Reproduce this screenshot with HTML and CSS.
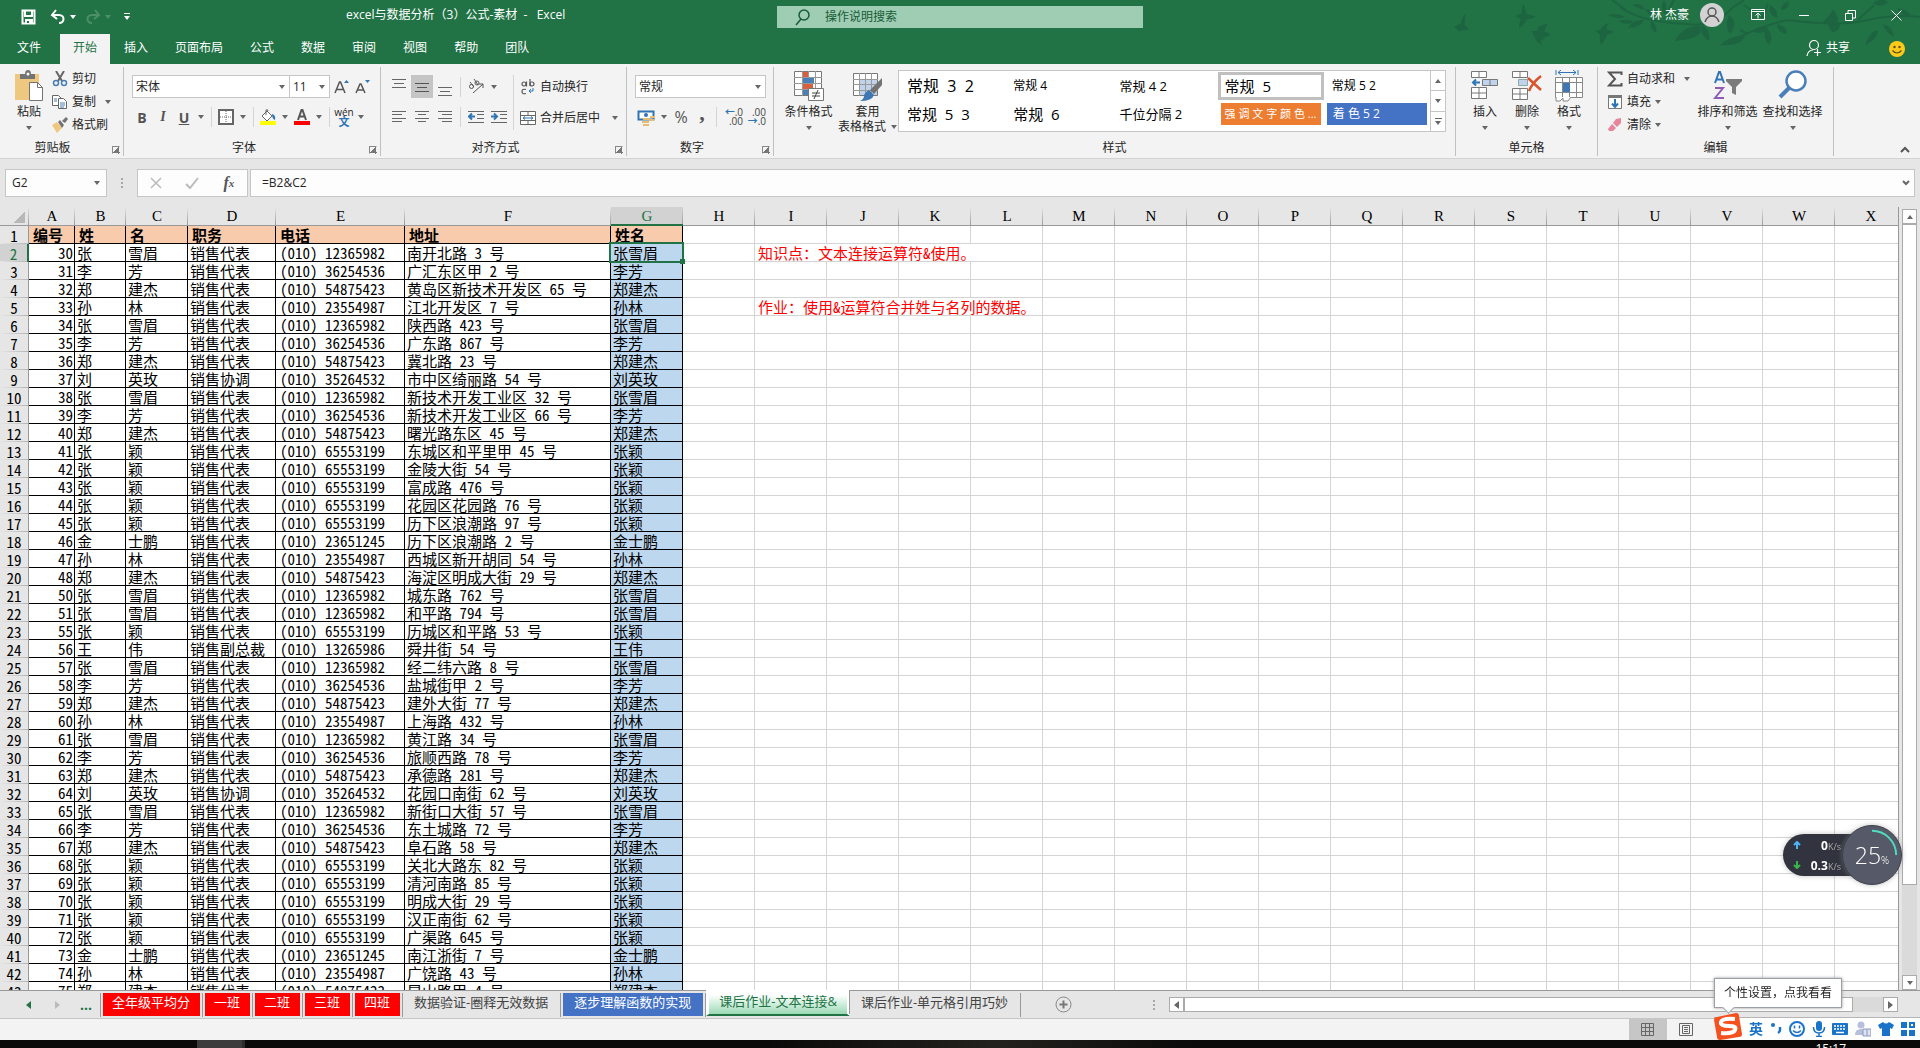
FILE: index.html
```html
<!DOCTYPE html>
<html lang="zh-CN">
<head>
<meta charset="utf-8">
<title>excel与数据分析（3）公式-素材 - Excel</title>
<link rel="stylesheet" href="styles.css">
</head>
<body>
<header class="top">
  <svg class="decor" viewBox="0 0 480 64" aria-hidden="true">
    <g fill="#1d6540">
      <path d="M14 27q4-2 7-4q1-7 5-9q-2 6-1 11q3 4 4 5l-6 0q-5 3-6-1z"/>
      <path d="M75 16q5-2 7-3q-1-6 2-9q2 6 2 10q6 1 10 3q-5 2-9 2q-2 6-8 9q0-6 2-9z"/>
      <path d="M91 31l6 0q-1-6 11-7q-4 4-3 8q4 1 6 3l-6 2q-2 3-5 4q2 3 3 4q-7-2-9-9q-2-4-3-5z"/>
      <path d="M155 31q5-1 6-2q2-5 8-6q-3 4-2 7q4 0 7 2l-7 3q-2 5-6 10q-2-7-1-10q-2-3-5-4z"/>
      <path d="M168 15q10-3 17 2q-9 3-17-2zM178 21q10-3 16 1q-9 4-16-1zM188 28q5-9 16-8q-4 8-16 8zM193 5q6 5 12 4q-5-7-12-4zM205 9q8 1 12 8q-9-1-12-8zM211 21q7 4 5 12q-7-5-5-12zM224 0q4 6 1 14q-6-6-1-14zM235 41q8-16 25-15q6 12-25 15zM262 25q9 5 7 16q-10-6-7-16zM289 15q10 7 1 19q-6-8-1-19zM280 45q12-11 25-8q-6 10-25 8zM312 31q10-7 16-3q-6 8-16 3zM326 27q9 9 3 18q-7-8-3-18zM337 24q10 2 10 10q-10-2-10-10zM330 5q9 5 7 13q-10-4-7-13zM341 10q1-8 8-8q0 8-8 8zM381 23q9-7 12-14q7 10 4 14zM387 23q10-3 13 3q-2 6-8 6zM425 45q4-14 13-15q0 9-13 15zM443 24q10 3 11 13q-8-4-11-13zM457 8q11 1 15 9q-11 0-15-9zM433 3q9-6 15-1q-7 7-15 1z"/>
    </g>
    <g fill="none" stroke="#1d6540" stroke-width="2">
      <path d="M180 7Q200 22 246 24Q275 28 292 8L304 0M304 5l10 7M292 41Q322 25 348 20Q400 27 428 20Q452 14 480 17M172 0l14 10M234 0l-8 15M300 30l8 4M322 18l6-14M418 20l16-15"/>
    </g>
  </svg>
  <div class="titlebar">
    <div class="quick">
      <button aria-label="保存"><svg width="16" height="16" viewBox="0 0 16 16"><path d="M1.500 1.500h12v13h-12z M4 2v5h7V2" fill="none" stroke="#fff" stroke-width="2"/><path d="M4 10h8v4H4z" fill="#fff"/><path d="M6 12h2v2H6z" fill="#217346"/></svg></button>
      <button class="undo" aria-label="撤消"><svg width="16" height="16" viewBox="0 0 16 16"><path d="M2 6h7c6 0 6 8 0 8M6 1L2 6l5 4" fill="none" stroke="#fff" stroke-width="2"/></svg><i class="ar light"></i></button>
      <button class="redo" aria-label="恢复"><svg width="16" height="16" viewBox="0 0 16 16"><path d="M14 6H7c-6 0-6 8 0 8M10 1l4 5-5 4" fill="none" stroke="#4d9068" stroke-width="2"/></svg><i class="ar light dim"></i></button>
      <button aria-label="自定义快速访问工具栏"><svg width="8" height="8" viewBox="0 0 8 8"><path d="M1 0h6v1H1zM1 3h6L4 7z" fill="#fff"/></svg></button>
    </div>
    <div class="title">excel与数据分析（3）公式-素材&nbsp;&nbsp;-&nbsp;&nbsp;&nbsp;Excel</div>
    <label class="search"><svg width="16" height="18" viewBox="0 0 16 18"><circle cx="9" cy="7" r="5" fill="none" stroke="#185c37" stroke-width="1.500"/><path d="M6 11l-5 6" stroke="#185c37" stroke-width="1.500"/></svg><input type="text" placeholder="操作说明搜索" aria-label="操作说明搜索"></label>
    <div class="account">
      <span>林 杰豪</span>
      <svg width="24" height="24" viewBox="0 0 24 24"><circle cx="12" cy="12" r="12" fill="#d2d2d2"/><g fill="none" stroke="#555" stroke-width="1.500"><circle cx="12" cy="9" r="4"/><path d="M5 19q2-6 7-6t7 6"/></g></svg>
    </div>
    <div class="winbtns">
      <button aria-label="功能区显示选项"><svg width="14" height="12" viewBox="0 0 14 12"><path d="M.500.500h13v10H.500zM.500 2.500h13M7 9.500v-5M4.500 6.500L7 4l2.500 2.500" fill="none" stroke="#fff"/></svg></button>
      <button aria-label="最小化"><svg width="10" height="10" viewBox="0 0 10 10"><path d="M0 5.500h10" stroke="#fff"/></svg></button>
      <button aria-label="还原"><svg width="11" height="11" viewBox="0 0 11 11"><path d="M.500 3.500h7v7h-7zM3 3V.500h7.500V8H8" fill="none" stroke="#fff"/></svg></button>
      <button aria-label="关闭"><svg width="11" height="11" viewBox="0 0 11 11"><path d="M.500.500l10 10M10.500.500l-10 10" stroke="#fff"/></svg></button>
    </div>
  </div>
  <nav class="tabs">
    <button class="file">文件</button><button class="on">开始</button><button>插入</button><button>页面布局</button><button>公式</button><button>数据</button><button>审阅</button><button>视图</button><button>帮助</button><button>团队</button>
    <button class="share"><svg width="16" height="18" viewBox="0 0 16 18"><g fill="none" stroke="#fff" stroke-width="1.200"><circle cx="8" cy="6" r="4.500"/><path d="M1 17q1-6 6-6M8 13.500h7M11.500 10v7"/></g></svg>共享</button>
    <button class="smile" aria-label="反馈"><svg width="16" height="16" viewBox="0 0 16 16"><circle cx="8" cy="8" r="8" fill="#fecb1b"/><circle cx="5.500" cy="6" r="1.200" fill="#5a4a18"/><circle cx="10.500" cy="6" r="1.200" fill="#5a4a18"/><path d="M3.500 9.500q4.500 5 9 0" fill="none" stroke="#5a4a18" stroke-width="1.200"/></svg></button>
  </nav>
</header>

<section class="ribbon">
  <div class="group clipboard">
    <div class="body">
      <button class="big"><svg width="28" height="32" viewBox="0 0 28 32"><path d="M0 4h24v26H0z" fill="#edc87e"/><path d="M5 4h5q0-4 3-4t3 4h4v5H5z" fill="#737373"/><circle cx="13" cy="4" r="1.500" fill="#fff"/><path d="M14.500 12.500h8l5 5v13h-13z" fill="#fff" stroke="#737373"/><path d="M22.500 12.500v5h5" fill="none" stroke="#737373"/></svg><span>粘贴</span><i class="ar"></i></button>
      <div class="stack">
        <button class="small"><svg width="16" height="16" viewBox="0 0 16 16"><path d="M4 0l6 10M12 0L6 10" stroke="#666" stroke-width="2"/><circle cx="4" cy="12" r="2.500" fill="none" stroke="#4a7fb5" stroke-width="1.500"/><circle cx="12" cy="12" r="2.500" fill="none" stroke="#4a7fb5" stroke-width="1.500"/></svg>剪切</button>
        <button class="small"><svg width="16" height="16" viewBox="0 0 16 16"><g fill="#fff" stroke="#666"><path d="M.500 1.500h6l3 3v7h-9z"/><path d="M6.500 4.500h5l3 3v7h-8z"/></g><path d="M2 5h3M2 7h3M8 9h5M8 11h5M8 13h4" stroke="#4a7fb5"/></svg>复制<i class="ar far"></i></button>
        <button class="small"><svg width="16" height="16" viewBox="0 0 16 16"><path d="M0 8l5-3 5 6-5 5z" fill="#edc87e"/><path d="M6 5l2-2 4 5-2 3zM10 4l4-4 2 2-3 4z" fill="#737373"/></svg>格式刷</button>
      </div>
    </div>
    <div class="label">剪贴板</div><button class="launch" aria-label="剪贴板选项"></button>
  </div>

  <div class="group font">
    <div class="body rows">
      <div class="row tall">
        <span class="combo name"><select aria-label="字体"><option>宋体</option></select></span><span class="combo size"><select aria-label="字号"><option>11</option></select></span>
        <button class="ic grow" aria-label="增大字号"><svg width="16" height="16" viewBox="0 0 16 16"><path d="M1 14L5.500 3h1L11 14M3 10.500h6" fill="none" stroke="#555" stroke-width="1.500"/><path d="M10 4h5l-2.500-3z" fill="#2f74b5"/></svg></button>
        <button class="ic" aria-label="减小字号"><svg width="16" height="16" viewBox="0 0 16 16"><path d="M1 14L5 5h1l4 9M3 11h5" fill="none" stroke="#555" stroke-width="1.500"/><path d="M10 1h5l-2.500 3z" fill="#2f74b5"/></svg></button>
      </div>
      <div class="row">
        <button class="ic b">B</button><button class="ic it">I</button><button class="ic u">U</button><i class="ar"></i><i class="sep"></i>
        <button class="ic" aria-label="边框"><svg width="16" height="16" viewBox="0 0 16 16"><path d="M1 1h14v14H1z" fill="#fff" stroke="#666" stroke-width="2"/><path d="M8 2v12M2 8h12" stroke="#666" stroke-dasharray="1 1"/></svg></button><i class="ar"></i><i class="sep"></i>
        <button class="ic" aria-label="填充颜色"><svg width="18" height="16" viewBox="0 0 18 16"><path d="M3 7l5-5 5 5-5 5z" fill="#fff" stroke="#666"/><path d="M7 6V1q2-1 2 1" fill="none" stroke="#666"/><path d="M13 5q4 1 3 6q-3-1-3-6z" fill="#2f74b5"/><path d="M1 12h16v4H1z" fill="#ff0"/></svg></button><i class="ar"></i>
        <button class="ic" aria-label="字体颜色"><svg width="16" height="16" viewBox="0 0 16 16"><path d="M4 11L7.500 1h1L12 11M5.500 7.500h5" fill="none" stroke="#555" stroke-width="2"/><path d="M0 12h16v4H0z" fill="red"/></svg></button><i class="ar"></i><i class="sep"></i>
        <button class="ic wen" aria-label="拼音"><span>wén</span><b>文</b></button><i class="ar"></i>
      </div>
    </div>
    <div class="label">字体</div><button class="launch" aria-label="字体设置"></button>
  </div>

  <div class="group align">
    <div class="body">
      <div class="rows">
        <div class="row tall">
          <button class="ic" aria-label="顶端对齐"><svg width="16" height="20" viewBox="0 0 16 20"><path d="M1 2.500h14M3 6.500h10M1 10.500h14" stroke="#666"/></svg></button><button class="ic on" aria-label="垂直居中"><svg width="16" height="20" viewBox="0 0 16 20"><path d="M1 6.500h14M3 10.500h10M1 14.500h14" stroke="#555"/></svg></button><button class="ic" aria-label="底端对齐"><svg width="16" height="20" viewBox="0 0 16 20"><path d="M1 10.500h14M3 14.500h10M1 18.500h14" stroke="#666"/></svg></button><i class="sep"></i>
          <button class="ic" aria-label="方向"><svg width="17" height="17" viewBox="0 0 17 17"><g fill="none" stroke="#555"><circle cx="3.500" cy="8.500" r="2"/><path d="M2 4l4 5"/><circle cx="9" cy="5" r="2"/><path d="M6 1l4 6M5 15L15 6M11 6h4v4"/></g></svg></button><i class="ar"></i>
        </div>
        <div class="row">
          <button class="ic" aria-label="左对齐"><svg width="16" height="14" viewBox="0 0 16 14"><path d="M1 1.500h14M1 4.500h10M1 8.500h14M1 11.500h10" stroke="#666"/></svg></button><button class="ic" aria-label="居中"><svg width="16" height="14" viewBox="0 0 16 14"><path d="M1 1.500h14M4 4.500h8M1 8.500h14M4 11.500h8" stroke="#666"/></svg></button><button class="ic" aria-label="右对齐"><svg width="16" height="14" viewBox="0 0 16 14"><path d="M1 1.500h14M5 4.500h10M1 8.500h14M5 11.500h10" stroke="#666"/></svg></button><i class="sep"></i>
          <button class="ic" aria-label="减少缩进"><svg width="16" height="14" viewBox="0 0 16 14"><path d="M0 1.500h16M9 4.500h7M9 8.500h7M0 12.500h16" stroke="#666"/><path d="M7 6.500H1M4 3.500l-3 3 3 3" fill="none" stroke="#2f74b5" stroke-width="2"/></svg></button><button class="ic" aria-label="增加缩进"><svg width="16" height="14" viewBox="0 0 16 14"><path d="M0 1.500h16M9 4.500h7M9 8.500h7M0 12.500h16" stroke="#666"/><path d="M0 6.500h6M3 3.500l3 3-3 3" fill="none" stroke="#2f74b5" stroke-width="2"/></svg></button>
        </div>
      </div>
      <i class="vsep"></i>
      <div class="rows">
        <button class="small tall"><svg width="16" height="16" viewBox="0 0 16 16"><g fill="none" stroke="#555" stroke-width="1.200"><circle cx="4" cy="5" r="2"/><path d="M6.500 2.500v5M10 0v7"/><circle cx="12" cy="5" r="2"/><path d="M6 10.500q-4-1-4 2t4 2"/></g><path d="M13 9v3H9M11 10l-2 2 2 2" fill="none" stroke="#2f74b5"/></svg>自动换行</button>
        <button class="small"><svg width="16" height="16" viewBox="0 0 16 16"><path d="M.500 1.500h15v13H.500zM.500 5.500h15M.500 10.500h15M8 1.500v4M8 10.500v4" fill="#fff" stroke="#666"/><path d="M3 8h10M5 6.500L3 8l2 1.500M11 6.500L13 8l-2 1.500" fill="none" stroke="#2f74b5"/></svg>合并后居中<i class="ar far"></i></button>
      </div>
    </div>
    <div class="label">对齐方式</div><button class="launch" aria-label="对齐设置"></button>
  </div>

  <div class="group number">
    <div class="body rows">
      <div class="row tall"><span class="combo fmt"><select aria-label="数字格式"><option>常规</option></select></span></div>
      <div class="row">
        <button class="ic" aria-label="会计数字格式"><svg width="18" height="17" viewBox="0 0 18 17"><path d="M1.500 2.500h15v8h-15z" fill="#fff" stroke="#2f74b5" stroke-width="2"/><circle cx="9" cy="6" r="2" fill="#2f74b5"/><path d="M6 9h6v2H6zM5 12h7v2H5zM6 15h6v2H6zM13 7h5v2h-5zM12 10h5v2h-5z" fill="#e8bd70"/></svg></button><i class="ar"></i>
        <button class="ic pct">%</button><button class="ic comma">,</button><i class="sep"></i>
        <button class="ic dec" aria-label="增加小数位数"><span><b>←</b>.0</span><span>.00</span></button><button class="ic dec" aria-label="减少小数位数"><span>.00</span><span><b>→</b>.0</span></button>
      </div>
    </div>
    <div class="label">数字</div><button class="launch" aria-label="数字设置"></button>
  </div>

  <div class="group styles">
    <div class="body">
      <button class="big"><svg width="30" height="32" viewBox="0 0 30 32"><path d="M.500 1.500h27v24H.500z" fill="#fff" stroke="#777"/><path d="M8.500 1v25M14.500 1v25M21.500 1v25M0 7.500h28M0 13.500h28M0 19.500h28" stroke="#999"/><path d="M9 2h5v5H9zM9 14h10v5H9z" fill="#d9603f"/><path d="M9 8h11v5H9zM9 20h5v5H9z" fill="#4a7fb8"/><path d="M14.500 18.500h15v12h-15z" fill="#fff" stroke="#777"/><path d="M18 23h8M18 26h8M24 20l-4 9" stroke="#444"/></svg><span>条件格式</span><i class="ar"></i></button>
      <button class="big"><svg width="30" height="32" viewBox="0 0 30 32"><path d="M.500 3.500h24v22H.500z" fill="#fff" stroke="#777"/><path d="M7 9h17v16H7z" fill="#c0d3ea"/><path d="M6.500 3v23M12.500 3v23M18.500 3v23M0 9.500h25M0 14.500h25M0 20.500h25" stroke="#999"/><path d="M29 8v7l-8 9-4-4z" fill="#737373"/><path d="M16 20l5 5q-2 6-14 6q4-2 4-5t5-6z" fill="#3f77b5"/></svg><span>套用</span><span class="two">表格格式<i class="ar"></i></span></button>
      <div class="gallery">
        <div class="cells">
          <button class="g16">常规&nbsp; 3&nbsp; 2</button><button class="g12">常规 4</button><button>常规 4 2</button><button class="g15 sel">常规&nbsp; 5</button><button class="g12">常规 5 2</button>
          <button class="g15">常规&nbsp; 5&nbsp; 3</button><button class="g15">常规&nbsp; 6</button><button>千位分隔 2</button><button class="fill orange">强 调 文 字 颜 色 ...</button><button class="fill blue">着 色 5 2</button>
        </div>
        <div class="spin"><button aria-label="上一行"><i class="ar up"></i></button><button aria-label="下一行"><i class="ar"></i></button><button aria-label="其他"><i class="line"></i><i class="ar"></i></button></div>
      </div>
    </div>
    <div class="label">样式</div>
  </div>

  <div class="group cellsg">
    <div class="body">
      <button class="big"><svg width="28" height="32" viewBox="0 0 28 32"><g fill="#fff" stroke="#777"><path d="M.500 1.500h15v6H.500zM8 1.500v6M.500 17.500h15v11H.500zM8 17.500v11M.500 23h15"/></g><path d="M11.500 9.500h15v6h-15zM19 9.500v6" fill="#c0d3ea" stroke="#777"/><path d="M9 12.500H2M5 9.500l-3 3 3 3" fill="none" stroke="#2f74b5" stroke-width="2"/></svg><span>插入</span><i class="ar"></i></button>
      <button class="big"><svg width="30" height="32" viewBox="0 0 30 32"><g fill="#fff" stroke="#777"><path d="M.500 1.500h15v6H.500zM8 1.500v6M.500 18.500h15v11H.500zM8 18.500v11M.500 24h15"/></g><path d="M6.500 9.500h9v6h-9z" fill="#c0d3ea" stroke="#8aa"/><path d="M16 8l13 12M29 6Q20 13 17 21" stroke="#d9532c" stroke-width="2.500" fill="none"/></svg><span>删除</span><i class="ar"></i></button>
      <button class="big"><svg width="30" height="32" viewBox="0 0 30 32"><path d="M2 0v5M24 0v5M4 2.500h18M7 0L4 2.500 7 5M19 0l3 2.500L19 5" fill="none" stroke="#2f74b5"/><path d="M1.500 7.500h27v20h-27zM8.500 7v21M15.500 7v21M22.500 7v21M1 12.500h27M1 22.500h27" fill="#fff" stroke="#888"/><path d="M9 13h7v9H9z" fill="#3f77b5"/><path d="M2 27v4h4l3-3v3h5l3-4" fill="#fff" stroke="#888"/></svg><span>格式</span><i class="ar"></i></button>
    </div>
    <div class="label">单元格</div>
  </div>

  <div class="group edit">
    <div class="body">
      <div class="stack">
        <button class="small"><svg width="16" height="16" viewBox="0 0 16 16"><path d="M14.500 4V1.500H2L8 8l-6 6.500h12.500V12" fill="none" stroke="#555" stroke-width="2"/></svg>自动求和<i class="ar far"></i></button>
        <button class="small"><svg width="16" height="16" viewBox="0 0 16 16"><path d="M1.500 1.500h13v13h-13z" fill="#fff" stroke="#777"/><path d="M1 1h14v3H1z" fill="#777"/><path d="M8 5v8M5 9.500L8 13l3-3.500" fill="none" stroke="#2f74b5" stroke-width="2"/></svg>填充<i class="ar"></i></button>
        <button class="small"><svg width="16" height="16" viewBox="0 0 16 16"><path d="M9 2l5-1v5l-4 4-4-4z" fill="#e8849b"/><path d="M5 7l4 4-3 3H2l-1-2z" fill="#e8849b"/></svg>清除<i class="ar"></i></button>
      </div>
      <button class="big wide"><svg width="30" height="32" viewBox="0 0 30 32"><path d="M2 13L6 2h1l4 11M3.500 9.500h6" fill="none" stroke="#2f74b5" stroke-width="2"/><path d="M2 18h8L2 28h9" fill="none" stroke="#8e5bb5" stroke-width="2"/><path d="M13 9h16v2l-6 6v8l-4-2v-6l-6-6z" fill="#7b7b7b"/></svg><span>排序和筛选</span><i class="ar"></i></button>
      <button class="big wide"><svg width="30" height="32" viewBox="0 0 30 32"><circle cx="18" cy="11" r="9.500" fill="#fff" stroke="#4a80b8" stroke-width="2.500"/><path d="M11 18l-9 9" stroke="#4a80b8" stroke-width="4"/></svg><span>查找和选择</span><i class="ar"></i></button>
    </div>
    <div class="label">编辑</div>
  </div>
  <div class="tail"><button aria-label="折叠功能区"><svg width="10" height="7" viewBox="0 0 10 7"><path d="M1 6l4-4 4 4" fill="none" stroke="#555" stroke-width="2"/></svg></button></div>
</section>

<section class="formula">
  <span class="combo nb"><input type="text" value="G2" aria-label="名称框"></span>
  <i class="dots"></i>
  <div class="fx">
    <button aria-label="取消"><svg width="12" height="12" viewBox="0 0 12 12"><path d="M1 1l10 10M11 1L1 11" stroke="#bbb" stroke-width="1.500"/></svg></button>
    <button aria-label="输入"><svg width="14" height="12" viewBox="0 0 14 12"><path d="M1 7l4 4 8-10" fill="none" stroke="#bbb" stroke-width="2"/></svg></button>
    <button class="fn">f<sub>x</sub></button>
  </div>
  <div class="fbox"><input type="text" value="=B2&amp;C2" aria-label="编辑栏"><svg width="8" height="6" viewBox="0 0 8 6"><path d="M1 1l3 3 3-3" fill="none" stroke="#666" stroke-width="2"/></svg></div>
</section>

<main class="work">
  <div class="sheet">
    <table id="grid"></table>
  </div>
  <div class="vbar"><button aria-label="向上滚动"><i class="ar up"></i></button><div class="thumb"></div><div class="track"></div><button aria-label="向下滚动"><i class="ar"></i></button></div>
</main>

<nav class="sheets">
  <div class="nav"><button aria-label="上一个"><svg width="6" height="8" viewBox="0 0 6 8"><path d="M5 0v8L0 4z" fill="#217346"/></svg></button><button aria-label="下一个"><svg width="6" height="8" viewBox="0 0 6 8"><path d="M1 0v8l5-4z" fill="#bbb"/></svg></button><button class="more">...</button></div>
  <button class="st red">全年级平均分</button><button class="st red">一班</button><button class="st red">二班</button><button class="st red">三班</button><button class="st red">四班</button><button class="st">数据验证-圈释无效数据</button><button class="st bl">逐步理解函数的实现</button><button class="st cur">课后作业-文本连接&amp;</button><button class="st">课后作业-单元格引用巧妙</button>
  <button class="add" aria-label="新工作表"><svg width="17" height="17" viewBox="0 0 17 17"><circle cx="8.500" cy="8.500" r="7.500" fill="none" stroke="#888"/><path d="M8.500 4.500v8M4.500 8.500h8" stroke="#777" stroke-width="2"/></svg></button>
  <i class="dots"></i>
  <div class="hbar"><button aria-label="向左滚动"><svg width="5" height="8" viewBox="0 0 5 8"><path d="M5 0v8L0 4z" fill="#666"/></svg></button><div class="thumb"></div><div class="track"></div><button aria-label="向右滚动"><svg width="5" height="8" viewBox="0 0 5 8"><path d="M0 0v8l5-4z" fill="#666"/></svg></button></div>
</nav>

<footer class="status">
  <button class="on" aria-label="普通"><svg width="14" height="13" viewBox="0 0 14 13"><path d="M.500.500h12v12H.500zM4.500 0v13M8.500 0v13M0 4.500h13M0 8.500h13" fill="none" stroke="#666"/></svg></button>
  <button aria-label="页面布局"><svg width="14" height="13" viewBox="0 0 14 13"><path d="M.500.500h13v12H.500zM3.500 2.500h7v8h-7zM5 4.500h4M5 6.500h4M5 8.500h4" fill="none" stroke="#666"/></svg></button>
</footer>
<div class="taskbar"><div class="run"></div><time>15:17</time></div>

<aside class="meter">
  <dl><div><dt><svg width="8" height="8" viewBox="0 0 8 8"><path d="M4 8V1M1 4l3-3 3 3" fill="none" stroke="#4db5f5" stroke-width="2"/></svg></dt><dd>0<small>K/s</small></dd></div><div><dt><svg width="8" height="8" viewBox="0 0 8 8"><path d="M4 0v7M1 4l3 3 3-3" fill="none" stroke="#39b54a" stroke-width="2"/></svg></dt><dd>0.3<small>K/s</small></dd></div></dl>
  <div class="ball"><svg viewBox="0 0 60 60" aria-hidden="true"><path d="M30 5a25 25 0 0 1 25 25" fill="none" stroke="#4fdcc0" stroke-width="2"/></svg><span>25<small>%</small></span></div>
</aside>

<div class="tip">个性设置，点我看看</div>
<div class="ime">
  <svg class="sogou" width="28" height="28" viewBox="0 0 28 28"><path d="M3 5L22 1q3 0 3 3l3 18q0 3-3 3L6 28q-3 0-3-3L0 8q0-3 3-3z" fill="#f4511e"/><path d="M21 7Q8 6 7 10t8 4q8 0 6 4t-14 3" fill="none" stroke="#fff" stroke-width="4"/></svg>
  <b>英</b>
  <svg width="12" height="14" viewBox="0 0 12 14"><circle cx="3" cy="3" r="2" fill="#1a73c8"/><path d="M10 5v3q0 2-2 3" fill="none" stroke="#1a73c8" stroke-width="2.500"/></svg>
  <svg width="16" height="16" viewBox="0 0 16 16"><circle cx="8" cy="8" r="7" fill="none" stroke="#1a73c8" stroke-width="2"/><path d="M5.500 4.500v3M10.500 4.500v3M4 9.500q4 4 8 0" fill="none" stroke="#1a73c8" stroke-width="1.500"/></svg>
  <svg width="14" height="16" viewBox="0 0 14 16"><rect x="4" y="0" width="6" height="10" rx="3" fill="#1a73c8"/><path d="M1.500 6q0 6 5.500 6t5.500-6M7 12v4M4 15.500h6" fill="none" stroke="#1a73c8" stroke-width="1.500"/></svg>
  <svg width="16" height="12" viewBox="0 0 16 12"><rect width="16" height="12" rx="1" fill="#1a73c8"/><path d="M2 3h12M2 6h12" stroke="#fff" stroke-width="1.500" stroke-dasharray="2 1"/><path d="M4 9.500h8" stroke="#fff" stroke-width="1.500"/></svg>
  <svg width="16" height="16" viewBox="0 0 16 16"><circle cx="6" cy="4" r="3.500" fill="#b6bfdb"/><path d="M0 14q0-6 6-6t5 6z" fill="#b6bfdb"/><path d="M8 8h8v7H8z" fill="#dde2f0" stroke="#8d9abf"/><path d="M12 8v7" stroke="#8d9abf"/></svg>
  <svg width="16" height="14" viewBox="0 0 16 14"><path d="M5 0q3 3 6 0l5 3-2 4-2-1v8H4V6L2 7 0 3z" fill="#1a73c8"/></svg>
  <svg width="14" height="14" viewBox="0 0 14 14"><path d="M0 0h6v6H0zM0 8h6v6H0zM8 8h6v6H8z" fill="#1a73c8"/><path d="M9 1h4v4H9z" fill="none" stroke="#1a73c8" stroke-width="2"/></svg>
</div>
<script src="grid.js"></script>
</body>
</html>
```
FILE: styles.css
```css
* { box-sizing: border-box; }
body { margin: 0; height: 100vh; display: flex; flex-direction: column; overflow: hidden; background: #e6e6e6; color: #262626; font: 12px/16px "Open Sans", "Noto Sans CJK SC", sans-serif; }
button, input, select { font: inherit; color: inherit; border: 0; margin: 0; padding: 0; background: none; border-radius: 0; outline: 0; }
svg { display: block; flex: none; }
i { font-style: normal; }

.ar { flex: none; width: 0; border: 3px solid transparent; border-top: 4px solid #666; border-bottom: 0; }
.ar.up { border-top: 0; border-bottom: 4px solid #666; }
.ar.light { border-top-color: #fff; }
.ar.dim { border-top-color: #4d9068; }

/* title bar and ribbon tabs */
.top { position: relative; background: #217346; color: #fff; flex: none; }
.decor { position: absolute; right: 0; top: 0; width: 480px; height: 64px; }
.titlebar { position: relative; height: 34px; display: flex; align-items: center; }
.quick { display: flex; align-items: center; padding-left: 21px; width: 346px; }
.quick button { display: flex; align-items: center; gap: 4px; }
.quick .undo { margin-left: 13px; }
.quick .redo { margin-left: 9px; }
.quick .redo + button { margin-left: 12px; }
.title { width: 431px; padding-bottom: 4px; white-space: nowrap; }
.search { width: 366px; height: 22px; background: #9fcdb3; display: flex; align-items: center; gap: 14px; padding-left: 18px; margin-bottom: 1px; }
.search input { flex: 1; height: 22px; }
.search input::placeholder { color: #185c37; opacity: 1; }
.account { flex: 1; display: flex; justify-content: flex-end; align-items: center; gap: 11px; padding-bottom: 4px; }
.winbtns { display: flex; width: 196px; padding: 0 0 4px 11px; }
.winbtns button { flex: 1; display: flex; justify-content: center; align-items: center; }
.tabs { position: relative; display: flex; gap: 1px; height: 30px; padding-left: 4px; }
.tabs button { padding: 0 13px 2px; }
.tabs .file { margin-right: 5px; }
.tabs .on { background: #f3f3f3; color: #217346; }
.tabs .share { margin-left: auto; display: flex; align-items: center; gap: 4px; padding-right: 14px; }
.tabs .smile { padding: 0 15px 0 24px; }

/* ribbon */
.ribbon { flex: none; display: flex; height: 95px; background: #f3f3f3; border-bottom: 1px solid #d2d2d2; padding-top: 3px; }
.group { position: relative; flex: none; display: flex; flex-direction: column; border-right: 1px solid #c0c0c0; margin-bottom: 2px; }
.body { display: flex; flex: 1; }
.label { text-align: center; height: 16px; }
.launch { position: absolute; right: 3px; bottom: 2px; width: 8px; height: 8px; border: 1px solid #888; border-right-color: transparent; border-bottom-color: transparent; background: linear-gradient(135deg, transparent 50%, #777 50%); }
.big { display: flex; flex-direction: column; align-items: center; padding-top: 3px; width: 42px; height: 66px; white-space: nowrap; }
.big span { line-height: 15px; }
.big .ar { margin-top: 7px; }
.big svg { margin-bottom: 2px; }
.big .two { display: flex; gap: 5px; align-items: center; }
.big .two .ar { margin-top: 0; }
.big.wide { width: 65px; }
.stack { display: flex; flex-direction: column; }
.small { display: flex; align-items: center; gap: 4px; height: 23px; white-space: nowrap; }
.small .ar { margin-left: 1px; }
.small .far { margin-left: 8px; }
.body.rows { padding-top: 8px; }
.rows { display: flex; flex-direction: column; gap: 8px; }
.row { display: flex; align-items: center; gap: 1px; height: 22px; }
.tall { height: 23px; }
.row .ar { margin: 0 3px; }
.sep { width: 1px; height: 20px; background: #d4d4d4; margin: 0 3px; }
.vsep { width: 1px; height: 55px; background: #d4d4d4; margin: 0 6px 0 3px; }
.ic { width: 22px; height: 22px; display: flex; align-items: center; justify-content: center; }
.ic.on { background: #c5c5c5; height: 23px; }
.combo { position: relative; display: flex; height: 23px; background: #fff; border: 1px solid #c6c6c6; }
.combo::after { content: ""; position: absolute; right: 4px; top: 9px; border: 3px solid transparent; border-top: 4px solid #666; border-bottom: 0; }
.combo select, .combo input { appearance: none; width: 100%; padding-left: 3px; }

.clipboard { width: 124px; }
.clipboard .body { padding-left: 8px; }
.clipboard .label { padding-right: 18px; }
.clipboard .small { padding-left: 2px; }
.clipboard .far { margin-left: 5px; }
.font { width: 257px; }
.font .body { padding-left: 8px; }
.font .label { padding-right: 16px; }
.font .ic { width: 20px; }
.name { width: 158px; }
.size { width: 41px; margin-left: -2px; }
.font .grow { margin-left: 1px; }
.b { font: bold 14px "Open Sans", sans-serif; color: #555; }
.it { font: italic bold 14px "Liberation Serif", serif; color: #555; }
.u { font: bold 14px "Open Sans", sans-serif; color: #555; text-decoration: underline; }
.wen { flex-direction: column; font-size: 10px; line-height: 10px; }
.wen b { color: #2f74b5; font-size: 11px; }
.align { width: 246px; }
.align .body { padding: 8px 0 0 7px; }
.align .label { padding-right: 16px; }
.number { width: 147px; }
.number .body { padding-left: 8px; }
.number .label { padding-right: 16px; }
.fmt { width: 131px; }
.pct { font-size: 16px; color: #555; width: 20px; }
.comma { font: bold 22px/10px "Liberation Serif", serif; color: #555; padding-bottom: 8px; width: 20px; }
.dec { flex-direction: column; font-size: 10px; line-height: 9px; align-items: flex-end; color: #444; }
.dec b { color: #2f74b5; }
.styles { flex: 1; min-width: 0; }
.styles .body { padding: 0 9px 0 5px; }
.styles .big { width: 59px; }
.gallery { flex: 1; display: flex; height: 62px; margin: 3px 0 0 1px; background: #fff; border: 1px solid #c6c6c6; min-width: 0; }
.cells { flex: 1; display: grid; grid-template-columns: repeat(5, 1fr); grid-template-rows: 28px 28px; padding: 1px 0; min-width: 0; }
.cells button { text-align: left; padding-left: 8px; white-space: nowrap; color: #000; font-size: 13px; min-width: 0; }
.cells .g12 { font-size: 12px; }
.cells .g15 { font-size: 15px; }
.cells .g16 { font-size: 16px; }
.cells .sel { border: 3px solid #c0c0c0; padding-left: 4px; }
.cells .fill { color: #fff; margin: 3px 3px; height: 22px; font-size: 12px; padding-left: 6px; }
.cells .orange { background: #ed7d31; font-size: 11px; padding-left: 4px; }
.cells .blue { background: #4472c4; }
.spin { width: 15px; display: flex; flex-direction: column; border-left: 1px solid #c6c6c6; }
.spin button { flex: 1; display: flex; flex-direction: column; align-items: center; justify-content: center; gap: 2px; }
.spin button + button { border-top: 1px solid #c6c6c6; }
.line { width: 7px; height: 1px; background: #666; }
.cellsg { width: 142px; }
.cellsg .body { padding-left: 8px; }
.edit { width: 236px; }
.edit .body { padding-left: 9px; }
.edit .stack { width: 88px; }
.edit .small .ar { margin-left: 0; }
.edit .small .far { margin-left: 5px; }
.tail { width: 86px; display: flex; align-items: flex-end; justify-content: flex-end; padding: 0 10px 5px 0; }

/* formula bar */
.formula { flex: none; height: 48px; display: flex; align-items: flex-start; padding: 10px 5px 0; }
.nb { width: 102px; height: 28px; background: #fdfdfd; }
.nb::after { top: 11px; right: 6px; }
.nb input { padding-left: 6px; }
.dots { width: 2px; height: 11px; margin: 9px 14px; background: repeating-linear-gradient(#a8a8a8 0 2px, transparent 2px 4px); }
.fx { width: 111px; height: 28px; display: flex; background: #fdfdfd; border: 1px solid #c6c6c6; }
.fx button { flex: 1; display: flex; align-items: center; justify-content: center; }
.fx .fn { font: italic bold 16px "Liberation Serif", serif; color: #555; }
.fn sub { font-size: 11px; }
.fbox { flex: 1; height: 28px; display: flex; align-items: center; margin-left: 2px; padding: 0 4px 0 11px; background: #fdfdfd; border: 1px solid #c6c6c6; }
.fbox input { flex: 1; }

/* worksheet */
.work { flex: 1; min-height: 0; display: flex; }
.sheet { flex: 1; min-width: 0; overflow: hidden; background: linear-gradient(#e6e6e6 19px, #fff 19px); border-right: 1px solid #999; }
table { table-layout: fixed; border-spacing: 0; border-collapse: separate; font: 15px/17px "Noto Sans Mono CJK SC", "Liberation Mono", "Noto Sans CJK SC", monospace; color: #000; }
td, th { padding: 0; height: 18px; font-weight: normal; border: 0 solid #d4d4d4; border-width: 0 1px 1px 0; white-space: nowrap; }
thead th { height: 19px; line-height: 18px; font-family: "Liberation Serif", serif; font-size: 15px; background: linear-gradient(transparent, #999) right / 1px 100% no-repeat #e6e6e6; border-right: 0; border-bottom-color: #999; }
thead .corner { background: linear-gradient(135deg, transparent 50%, #b8b8b8 50%) 14px 5px / 11px 11px no-repeat, linear-gradient(transparent, #999) right / 1px 100% no-repeat #e6e6e6; }
thead .act { background-color: #d2d2d2; color: #217346; border-bottom-color: #217346; box-shadow: inset 0 -1px #217346; }
tbody th { background: linear-gradient(90deg, #e6e6e6, #b5b5b5) bottom / 100% 1px no-repeat #e6e6e6; border-bottom: 0; border-right-color: #999; }
tbody .act { background-color: #d2d2d2; color: #217346; border-right: 2px solid #217346; }
.d { border-color: #000; padding-left: 2px; }
.num { text-align: right; padding-right: 1px; }
.ph { padding-left: 4px; }
.nm { background: #bdd7ee; }
.hd td.d { background: #f8cbad; font-weight: bold; padding-left: 4px; }
.note { color: red; padding-left: 3px; }
.cursor { position: relative; }
.cursor::before { content: ""; position: absolute; inset: -2px -2px -2px -2px; border: 2px solid #217346; }
.cursor::after { content: ""; position: absolute; right: -3px; bottom: -3px; width: 5px; height: 5px; background: #217346; }
.vbar { width: 21px; padding: 2px 3px 0 3px; display: flex; flex-direction: column; }
.vbar button, .hbar button { background: #fff; border: 1px solid #ababab; width: 15px; height: 15px; display: flex; align-items: center; justify-content: center; flex: none; }
.thumb { background: #fff; border: 1px solid #ababab; }
.track { background: #dadada; }
.vbar .thumb { flex: 88; }
.vbar .track { flex: 12; }

/* sheet tabs */
.sheets { flex: none; height: 29px; display: flex; align-items: flex-start; border-top: 1px solid #999; border-bottom: 1px solid #c6c6c6; font-size: 13px; }
.nav { width: 101px; height: 24px; display: flex; align-items: center; padding-left: 26px; gap: 22px; border-right: 1px solid #999; margin: 2px 2px 0 0; }
.nav .more { color: #217346; font-weight: bold; font-size: 14px; margin-left: -2px; }
.st { position: relative; height: 23px; margin: 2px 5px 0 0; padding: 0 10px 5px 9px; white-space: nowrap; color: #444; line-height: 18px; }
.st::after { content: ""; position: absolute; right: -3px; top: 0; height: 24px; width: 1px; background: #999; }
.red { background: red; color: #fff; }
.bl { background: #4472c4; color: #fff; padding: 0 12px 5px 11px; }
.cur { height: 26px; margin: -1px 2px 0 -2px; padding: 2px 10px 4px; color: #217346; background: linear-gradient(#fff 20%, #9bdab5); border: 1px solid #fff; border-width: 0 3px; border-bottom: 2px solid #217346; }
.add { margin: 5px 0 0 32px; }
.sheets .dots { margin: 9px 14px 0 auto; }
.hbar { display: flex; width: 729px; height: 15px; margin: 6px 22px 0 0; }
.hbar .thumb { flex: 669; }
.hbar .track { flex: 30; }

.status { flex: none; height: 21px; background: #f3f3f3; display: flex; justify-content: flex-end; padding-right: 215px; }
.status button { width: 38px; display: flex; align-items: center; justify-content: center; }
.status .on { background: #c6c6c6; }
.taskbar { flex: none; height: 8px; overflow: hidden; background: linear-gradient(90deg, #0a0a0a 40%, #24221e 52%, #0a0a0a 62%); display: flex; justify-content: space-between; padding: 0 74px 0 197px; }
.run { width: 48px; background: #3c3c3c; border-right: 3px solid #2c2c2c; }
.taskbar time { color: #fff; line-height: 16px; padding-top: 1px; }

/* floating widgets */
.meter { position: fixed; right: 18px; bottom: 163px; display: flex; align-items: center; color: #fff; }
.meter dl { margin: 0 -24px 0 0; width: 83px; height: 42px; padding: 2px 25px 2px 10px; border-radius: 21px 0 0 21px; background: #31343e; box-shadow: 0 0 5px #8888; display: flex; flex-direction: column; justify-content: space-between; }
.meter dl div { display: flex; align-items: center; justify-content: space-between; height: 18px; }
.meter dd { margin: 0 0 0 -8px; font: bold 12px "Open Sans", sans-serif; white-space: nowrap; }
.meter dl small { font-size: 9px; font-weight: normal; color: #aaa; }
.ball { position: relative; width: 60px; height: 60px; border-radius: 30px; background: #565a68; border: 1px solid #3c3f4a; box-shadow: 0 0 5px #8888; display: flex; align-items: center; justify-content: center; font: 300 23px "Open Sans", sans-serif; }
.ball svg { position: absolute; inset: 0; }
.ball small { font-size: 10px; }
.tip { position: fixed; right: 78px; bottom: 40px; width: 128px; height: 30px; background: #fff; border: 1px solid #9aa0a6; box-shadow: 0 0 3px #999; line-height: 28px; text-align: center; z-index: 2; }
.tip::after { content: ""; position: absolute; left: 9px; bottom: -5px; width: 8px; height: 8px; background: #fff; border: 1px solid #9aa0a6; border-top: 0; border-left: 0; transform: rotate(45deg); }
.ime { position: fixed; right: 0; bottom: 8px; width: 206px; height: 23px; padding-right: 5px; display: flex; align-items: center; justify-content: space-between; background: linear-gradient(90deg, transparent 14px, #fff 14px); border-top: 1px solid #b5b5b5; }
.ime b { color: #1a73c8; font-size: 14px; }
.sogou { margin: -6px 0 0 0; }
```
FILE: grid.js
```js
const people = {
  a: ["张", "雪眉", "销售代表", "12365982"],
  b: ["李", "芳", "销售代表", "36254536"],
  c: ["郑", "建杰", "销售代表", "54875423"],
  d: ["孙", "林", "销售代表", "23554987"],
  e: ["刘", "英玫", "销售协调", "35264532"],
  f: ["张", "颖", "销售代表", "65553199"],
  g: ["金", "士鹏", "销售代表", "23651245"],
  h: ["王", "伟", "销售副总裁", "13265986"]
};
const orders = `30 a 南开北路 3 号
31 b 广汇东区甲 2 号
32 c 黄岛区新技术开发区 65 号
33 d 江北开发区 7 号
34 a 陕西路 423 号
35 b 广东路 867 号
36 c 冀北路 23 号
37 e 市中区绮丽路 54 号
38 a 新技术开发工业区 32 号
39 b 新技术开发工业区 66 号
40 c 曙光路东区 45 号
41 f 东城区和平里甲 45 号
42 f 金陵大街 54 号
43 f 富成路 476 号
44 f 花园区花园路 76 号
45 f 历下区浪潮路 97 号
46 g 历下区浪潮路 2 号
47 d 西城区新开胡同 54 号
48 c 海淀区明成大街 29 号
50 a 城东路 762 号
51 a 和平路 794 号
55 f 历城区和平路 53 号
56 h 舜井街 54 号
57 a 经二纬六路 8 号
58 b 盐城街甲 2 号
59 c 建外大街 77 号
60 d 上海路 432 号
61 a 黄江路 34 号
62 b 旅顺西路 78 号
63 c 承德路 281 号
64 e 花园口南街 62 号
65 a 新街口大街 57 号
66 b 东土城路 72 号
67 c 阜石路 58 号
68 f 关北大路东 82 号
69 f 清河南路 85 号
70 f 明成大街 29 号
71 f 汉正南街 62 号
72 f 广渠路 645 号
73 g 南江浙街 7 号
74 d 广饶路 43 号
75 c 昆山路甲 4 号`.split("\n");

const widths = [29, 46, 51, 62, 88, 129, 206, 72];
const letters = "ABCDEFGHIJKLMNOPQRSTUVWX";
while (widths.length < letters.length + 1) widths.push(72);
const notes = { 2: "知识点：文本连接运算符&amp;使用。", 5: "作业：使用&amp;运算符合并姓与名列的数据。" };

const blanks = row => {
  const cell = "<td></td>";
  return notes[row] ? cell + `<td class="note" colspan="4">${notes[row]}</td>` + cell.repeat(12) : cell.repeat(17);
};

let html = "<colgroup>" + widths.map(w => `<col style="width:${w}px">`).join("") + "</colgroup>";
html += '<thead><tr><th class="corner"></th>' + [...letters].map(l => `<th${l === "G" ? ' class="act"' : ""}>${l}</th>`).join("") + "</tr></thead><tbody>";
html += '<tr class="hd"><th>1</th>' + ["编号", "姓", "名", "职务", "电话", "地址", "姓名"].map(t => `<td class="d">${t}</td>`).join("") + blanks(1) + "</tr>";
orders.forEach((line, i) => {
  const row = i + 2;
  const [, id, key, address] = line.match(/^(\d+) (\w) (.+)$/);
  const [last, first, job, phone] = people[key];
  html += `<tr><th${row === 2 ? ' class="act"' : ""}>${row}</th><td class="d num">${id}</td><td class="d">${last}</td><td class="d">${first}</td><td class="d">${job}</td><td class="d ph">(010) ${phone}</td><td class="d">${address}</td><td class="d nm${row === 2 ? " cursor" : ""}">${last}${first}</td>${blanks(row)}</tr>`;
});
const grid = document.getElementById("grid");
grid.innerHTML = html + "</tbody>";
grid.style.width = widths.reduce((a, b) => a + b) + "px";
```
